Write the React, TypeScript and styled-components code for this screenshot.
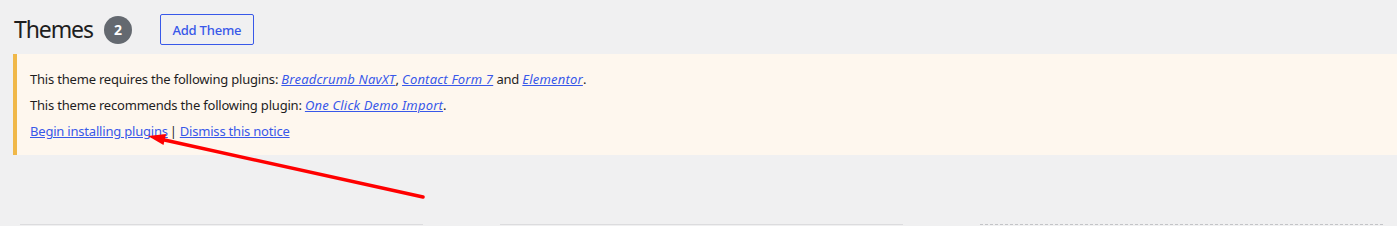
import styled, { createGlobalStyle, css } from 'styled-components';

const GlobalStyle = createGlobalStyle`
  html, body {
    margin: 0;
    padding: 0;
    background: #f0f0f1;
    overflow: hidden;
  }
  body {
    font-family: 'Noto Sans', 'Open Sans', sans-serif;
    font-size: 13px;
    letter-spacing: -0.2px;
    color: #1e1e1e;
  }
`;

const requiredPlugins = ['Breadcrumb NavXT', 'Contact Form 7', 'Elementor'];

export default function App() {
  return (
    <>
      <GlobalStyle />
      <StyledPage>
        <StyledHeader>
          <StyledTitle>Themes</StyledTitle>
          <StyledCount>2</StyledCount>
          <StyledAddButton type='button'>Add Theme</StyledAddButton>
        </StyledHeader>

        {/* Plugin notice */}
        <StyledNotice>
          <StyledNoticeText>
            This theme requires the following plugins:{' '}
            <StyledLink href='#'>
              <StyledPluginName>{requiredPlugins[0]}</StyledPluginName>
            </StyledLink>
            ,{' '}
            <StyledLink href='#'>
              <StyledPluginName>{requiredPlugins[1]}</StyledPluginName>
            </StyledLink>{' '}
            and{' '}
            <StyledLink href='#'>
              <StyledPluginName>{requiredPlugins[2]}</StyledPluginName>
            </StyledLink>
            .
          </StyledNoticeText>
          <StyledNoticeText>
            This theme recommends the following plugin:{' '}
            <StyledLink href='#'>
              <StyledPluginName>One Click Demo Import</StyledPluginName>
            </StyledLink>
            .
          </StyledNoticeText>
          <StyledNoticeText>
            <StyledLink href='#'>Begin installing plugins</StyledLink>
            <StyledSeparator>|</StyledSeparator>
            <StyledLink href='#'>Dismiss this notice</StyledLink>
          </StyledNoticeText>
        </StyledNotice>

        <StyledThemeGrid>
          <StyledThemeCard />
          <StyledThemeCard />
          <StyledThemeCard $isNew />
        </StyledThemeGrid>

        <StyledArrow width='1397' height='226' viewBox='0 0 1397 226'>
          <line
            x1='423'
            y1='197'
            x2='160'
            y2='139'
            stroke='#ff0000'
            strokeWidth='3.5'
            strokeLinecap='round'
          />
          <polygon points='148,136 166,134 163.5,145' fill='#ff0000' />
        </StyledArrow>
      </StyledPage>
    </>
  );
}

const StyledPage = styled.div`
  position: relative;
  padding: 0 0 0 13px;
`;

const StyledHeader = styled.div`
  display: flex;
  align-items: center;
  height: 31px;
  padding: 14px 0 0 1px;
`;

const StyledTitle = styled.h1`
  margin: 0;
  font-size: 23px;
  font-weight: 400;
  letter-spacing: -1.1px;
  line-height: 31px;
  color: #1e1e1e;
`;

const StyledCount = styled.span`
  display: flex;
  align-items: center;
  justify-content: center;
  width: 28px;
  height: 28px;
  margin-left: 11px;
  border-radius: 50%;
  background: #646970;
  color: #fff;
  font-size: 14px;
  font-weight: 700;
`;

const StyledAddButton = styled.button`
  height: 31px;
  width: 94px;
  margin-left: 28px;
  padding: 0;
  border: 1px solid #3858e9;
  border-radius: 2px;
  background: transparent;
  color: #3858e9;
  font-family: inherit;
  font-size: 13px;
  font-weight: 500;
  letter-spacing: -0.2px;
`;

const StyledNotice = styled.div`
  display: flex;
  flex-direction: column;
  gap: 6px;
  margin-top: 9px;
  padding: 15px 13px 14px;
  border-left: 4px solid #f0b849;
  background: #fef7ee;
`;

const StyledNoticeText = styled.p`
  margin: 0;
  line-height: 20px;
  white-space: nowrap;
`;

const StyledLink = styled.a`
  color: #3858e9;
  text-decoration: underline;
`;

const StyledPluginName = styled.em`
  letter-spacing: 0.2px;
`;

const StyledSeparator = styled.span`
  margin: 0 3px 0 2px;
`;

const StyledThemeGrid = styled.div`
  display: flex;
  gap: 77px;
  margin-top: 69px;
  padding-left: 7px;
`;

const StyledThemeCard = styled.div`
  width: 403px;
  height: 300px;
  flex-shrink: 0;
  border-top: 1px solid #dcdcde;
  ${({ $isNew }) =>
    $isNew &&
    css`
      border-top: 1px dashed #c3c4c7;
    `}
`;

const StyledArrow = styled.svg`
  position: absolute;
  top: 0;
  left: 0;
  pointer-events: none;
`;
